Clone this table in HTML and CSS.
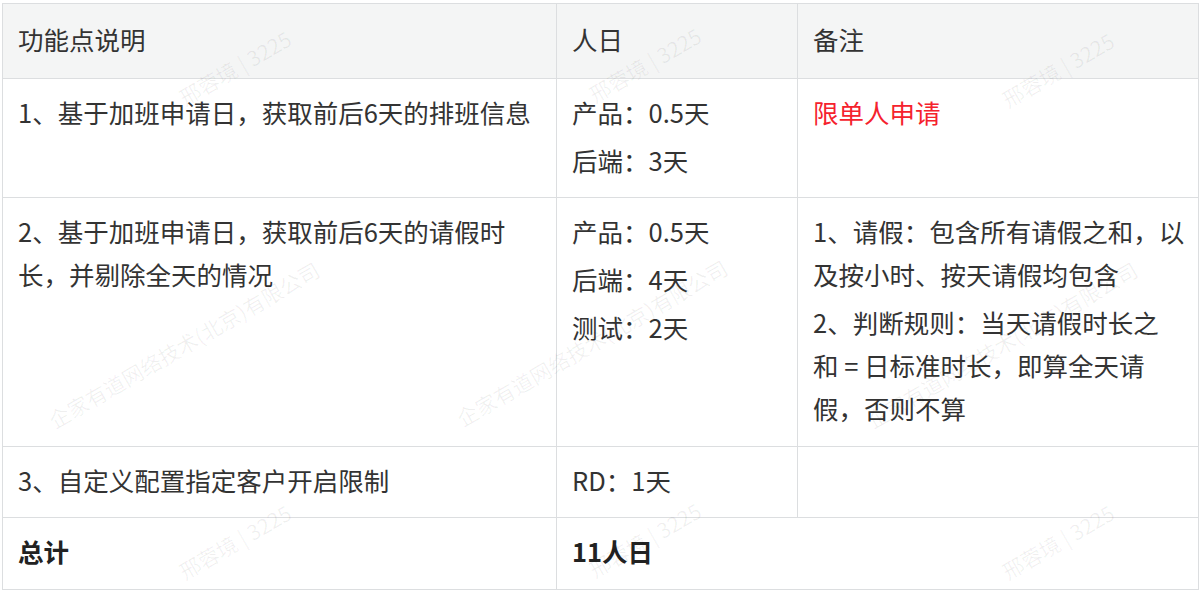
FILE: index.html
```html
<!DOCTYPE html>
<html lang="zh-CN">
<head>
<meta charset="utf-8">
<title>功能点说明</title>
<link rel="stylesheet" href="styles.css">
</head>
<body>
<div class="page">
  <table class="spec">
    <colgroup>
      <col class="col-desc">
      <col class="col-days">
      <col class="col-note">
    </colgroup>
    <thead>
      <tr>
        <th>功能点说明</th>
        <th>人日</th>
        <th>备注</th>
      </tr>
    </thead>
    <tbody>
      <tr>
        <td><p>1、基于加班申请日，获取前后6天的排班信息</p></td>
        <td><p>产品：0.5天</p><p>后端：3天</p></td>
        <td><p class="warn">限单人申请</p></td>
      </tr>
      <tr>
        <td><p>2、基于加班申请日，获取前后6天的请假时长，并剔除全天的情况</p></td>
        <td><p>产品：0.5天</p><p>后端：4天</p><p>测试：2天</p></td>
        <td class="note"><p>1、请假：包含所有请假之和，以及按小时、按天请假均包含</p><p>2、判断规则：当天请假时长之和&nbsp;=&nbsp;日标准时长，即算全天请假，否则不算</p></td>
      </tr>
      <tr>
        <td><p>3、自定义配置指定客户开启限制</p></td>
        <td><p>RD：1天</p></td>
        <td></td>
      </tr>
      <tr class="total">
        <td><p>总计</p></td>
        <td colspan="2"><p>11人日</p></td>
      </tr>
    </tbody>
  </table>

  <div class="watermarks" aria-hidden="true">
    <span class="wm wm-n1">邢蓉境 | 3225</span>
    <span class="wm wm-n2">邢蓉境 | 3225</span>
    <span class="wm wm-n3">邢蓉境 | 3225</span>
    <span class="wm wm-c1">企家有道网络技术(北京)有限公司</span>
    <span class="wm wm-c2">企家有道网络技术(北京)有限公司</span>
    <span class="wm wm-c3">企家有道网络技术(北京)有限公司</span>
    <span class="wm wm-n4">邢蓉境 | 3225</span>
    <span class="wm wm-n5">邢蓉境 | 3225</span>
    <span class="wm wm-n6">邢蓉境 | 3225</span>
  </div>
</div>
</body>
</html>
```

FILE: styles.css
```css
html, body {
  margin: 0;
  padding: 0;
  background: #ffffff;
}

body {
  font-family: "Noto Sans CJK SC", "Noto Sans", sans-serif;
  color: #333333;
}

.page {
  position: relative;
  padding: 3px 2px 0 2px;
  width: 1196px;
}

.spec {
  width: 1196px;
  table-layout: fixed;
  border-collapse: collapse;
  font-size: 25.5px;
  line-height: 43px;
}

.col-desc { width: 554px; }
.col-days { width: 241px; }
.col-note { width: 401px; }

.spec th,
.spec td {
  border: 1px solid #dcdee0;
  text-align: left;
  vertical-align: top;
  padding: 11px 14px 16px 15px;
}

.spec th {
  background: #f4f5f5;
  font-weight: 400;
  padding-top: 13px;
  padding-bottom: 18px;
}

.spec p {
  margin: 0;
}

.spec p + p {
  margin-top: 5px;
}

.spec .note {
  padding-right: 11px;
  padding-bottom: 17px;
}

.warn {
  color: #f5222d;
}

.total td {
  font-weight: 700;
  color: #222222;
  padding-bottom: 17px;
}

.watermarks {
  position: absolute;
  inset: 0;
  pointer-events: none;
  overflow: hidden;
}

.wm {
  position: absolute;
  font-size: 21px;
  line-height: 1;
  white-space: nowrap;
  color: rgba(0, 0, 0, 0.06);
  transform: translate(-50%, -50%) rotate(-30deg);
}

.wm-n1 { left: 235px; top: 68px; }
.wm-n2 { left: 645px; top: 65px; }
.wm-n3 { left: 1058px; top: 70px; }
.wm-c1 { left: 184px; top: 345px; }
.wm-c2 { left: 592px; top: 343px; }
.wm-c3 { left: 1002px; top: 345px; }
.wm-n4 { left: 235px; top: 542px; }
.wm-n5 { left: 645px; top: 540px; }
.wm-n6 { left: 1058px; top: 542px; }
```
